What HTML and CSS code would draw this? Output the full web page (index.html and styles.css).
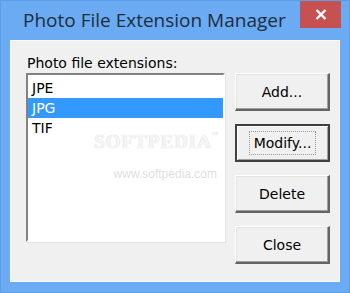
FILE: index.html
```html
<!DOCTYPE html>
<html lang="en">
<head>
    <meta charset="UTF-8">
    <title>Photo File Extension Manager</title>
    <link rel="stylesheet" href="styles.css">
</head>
<body>

    <!-- Janela do diálogo -->
    <div class="window">
        <div class="titlebar">
            <span class="title">Photo File Extension Manager</span>
            <div class="close-btn">
                <svg width="12" height="11" viewBox="0 0 12 11">
                    <path d="M1.5 1 L10.5 10 M10.5 1 L1.5 10" stroke="#fff" stroke-width="2.4"/>
                </svg>
            </div>
        </div>

        <div class="client">
            <div class="list-column">
                <label class="list-label">Photo file extensions:</label>
                <div class="listbox">
                    <div class="item">JPE</div>
                    <div class="item selected">JPG</div>
                    <div class="item">TIF</div>

                    <!-- marca d'água -->
                    <div class="watermark">SOFTPEDIA<sup>™</sup></div>
                    <div class="watermark-url">www.softpedia.com</div>
                </div>
            </div>
            <div class="buttons">
                <button>Add...</button>
                <button class="default"><span>Modify...</span></button>
                <button>Delete</button>
                <button>Close</button>
            </div>
        </div>
    </div>

</body>
</html>
```

FILE: styles.css
```css
html, body {
    margin: 0;
    padding: 0;
}
body {
    width: 350px;
    height: 293px;
    overflow: hidden;
    font-family: "DejaVu Sans", Verdana, sans-serif;
}
.window {
    width: 350px;
    height: 293px;
    box-sizing: border-box;
    background-color: #6aabf3;
    border: 1px solid #5b9de6;
    display: flex;
    flex-direction: column;
}
/* Barra de título */
.titlebar {
    height: 39px;
    display: flex;
    justify-content: space-between;
    align-items: flex-start;
}
.title {
    font-family: "Open Sans", "Noto Sans", sans-serif;
    font-size: 19px;
    color: #1f2d3d;
    margin: 6px 0 0 22px;
}
.close-btn {
    width: 41px;
    height: 27px;
    background-color: #c75050;
    margin-right: 8px;
    display: flex;
    align-items: center;
    justify-content: center;
}
/* Área do cliente */
.client {
    flex: 1;
    margin: 0 9px 10px 9px;
    background-color: #f0f0f0;
    border: 1px solid #fafafa;
    display: flex;
    padding: 14px 9px 0 15px;
}
.list-column {
    display: flex;
    flex-direction: column;
}
.list-label {
    font-size: 14px;
    color: #000;
    margin-left: 1px;
    height: 18px;
}
.listbox {
    position: relative;
    width: 195px;
    height: 162px;
    background-color: #fff;
    border-style: solid;
    border-width: 2px;
    border-color: #828282 #fff #fff #828282;
    box-shadow: 1px 1px 0 #e3e3e3;
    padding-top: 3px;
    box-sizing: content-box;
}
.item {
    height: 20px;
    line-height: 20px;
    font-size: 14px;
    padding-left: 4px;
    color: #000;
}
.item.selected {
    background-color: #3399ff;
    color: #fff;
}
/* Botões */
.buttons {
    display: flex;
    flex-direction: column;
    gap: 13px;
    margin-left: 10px;
    margin-top: 18px;
}
button {
    width: 95px;
    height: 38px;
    background-color: #f0f0f0;
    font-family: "DejaVu Sans", Verdana, sans-serif;
    font-size: 14px;
    color: #000;
    border-style: solid;
    border-width: 1px 2px 2px 1px;
    border-color: #fff #646464 #646464 #fff;
    box-shadow: inset -1px -1px 0 #a0a0a0, inset 1px 1px 0 #e3e3e3;
    padding: 0;
    margin: 0;
}
button.default {
    border: 2px solid #404040;
    box-shadow: inset 1px 1px 0 #fff, inset -1px -1px 0 #a0a0a0;
}
button.default span {
    display: inline-block;
    white-space: nowrap;
    border: 1px dotted #9a9a9a;
    padding: 3px 4px;
}
/* Marca d'água, dentro da lista */
.watermark {
    position: absolute;
    right: 4px;
    top: 56px;
    font-family: "Liberation Serif", serif;
    font-weight: bold;
    font-size: 19px;
    letter-spacing: 1px;
    color: rgba(255, 255, 255, 0.85);
    text-shadow: 0 0 1px rgba(150, 150, 150, 0.6);
    pointer-events: none;
}
.watermark sup {
    font-size: 6px;
    vertical-align: 12px;
}
.watermark-url {
    position: absolute;
    right: 6px;
    top: 92px;
    font-family: "Liberation Sans", Arial, sans-serif;
    font-size: 12px;
    color: rgba(200, 200, 200, 0.6);
    pointer-events: none;
}
```
